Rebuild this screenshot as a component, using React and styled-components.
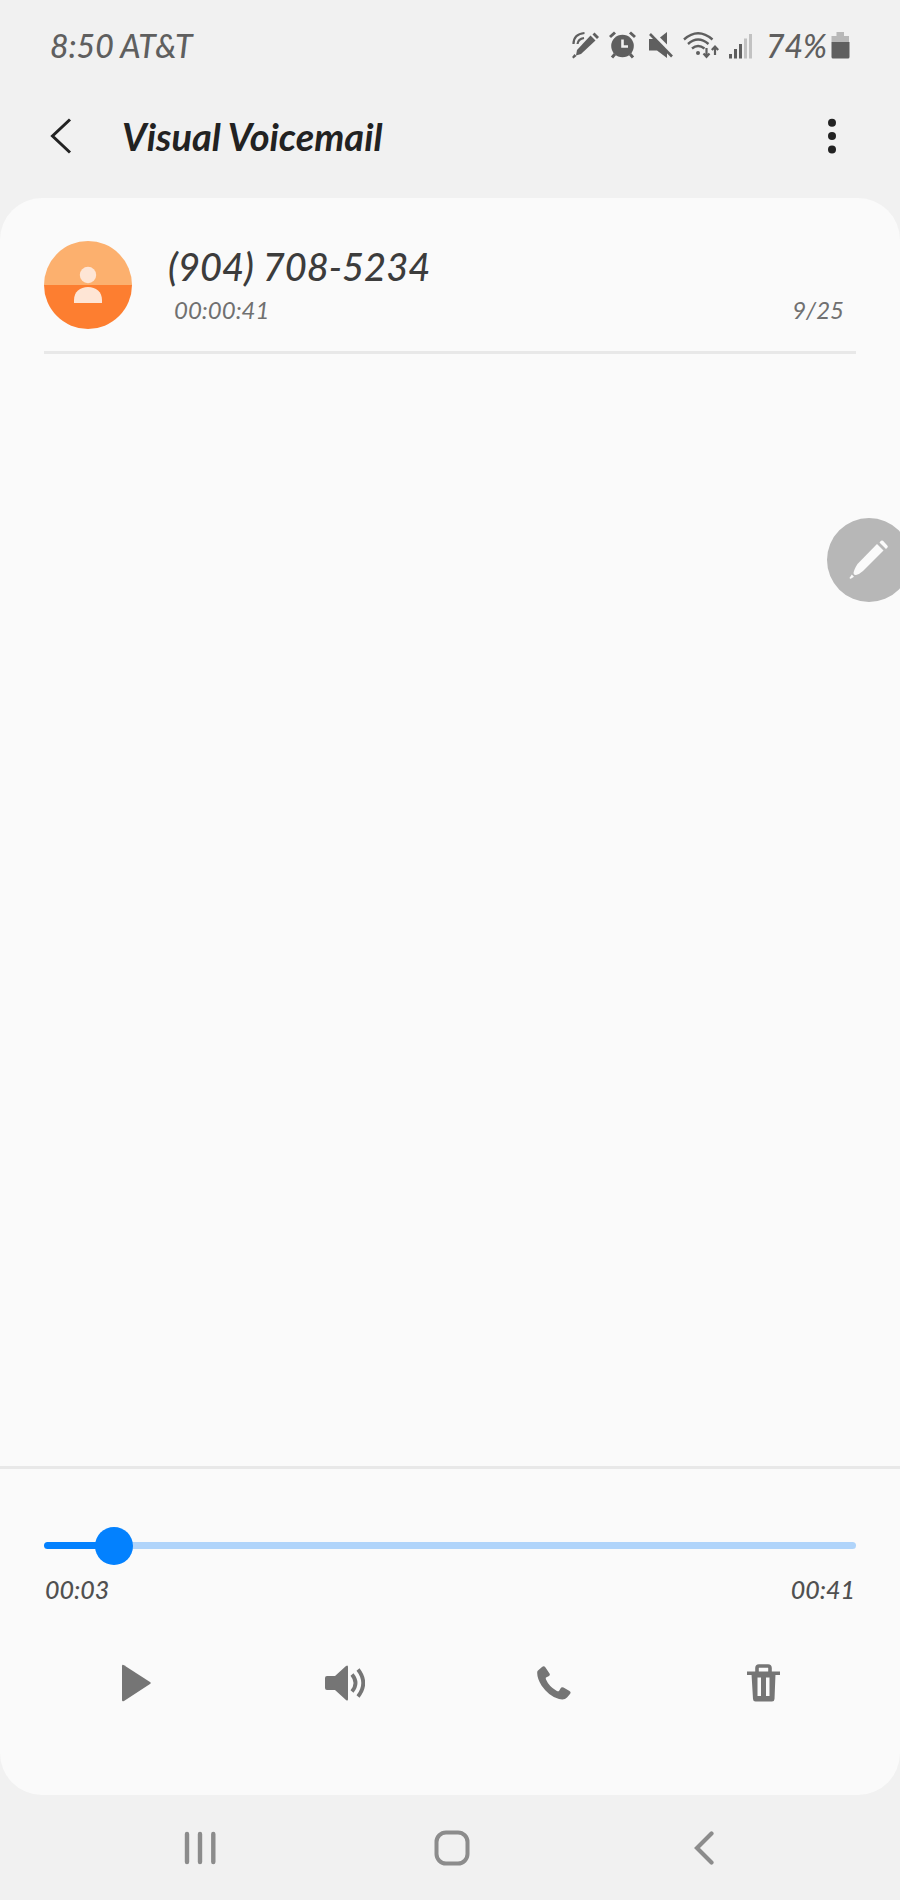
import React, { useState } from 'react';
import styled, { createGlobalStyle } from 'styled-components';

const DURATION = 41;

const App = () => {
  const [position, setPosition] = useState(2.7);

  return (
    <Screen>
      <GlobalStyle />
      <StatusBar>
        <StatusText>8:50 AT&amp;T</StatusText>
        <StatusIcons>
          <PenStatusIcon />
          <AlarmIcon />
          <MuteIcon />
          <WifiIcon />
          <SignalIcon />
          <BatteryGroup>
            <StatusText>74%</StatusText>
            <BatteryIcon />
          </BatteryGroup>
        </StatusIcons>
      </StatusBar>

      <Header>
        <IconButton aria-label="Back">
          <svg width="24" height="36" viewBox="0 0 24 36" fill="none" stroke="#222" strokeWidth="3">
            <path d="M22 1.5 4.5 18 22 34.5" />
          </svg>
        </IconButton>
        <Title>Visual Voicemail</Title>
        <IconButton aria-label="More options">
          <svg width="8" height="36" viewBox="0 0 8 36" fill="#222">
            <circle cx="4" cy="4.8" r="4" />
            <circle cx="4" cy="18" r="4" />
            <circle cx="4" cy="31.4" r="4" />
          </svg>
        </IconButton>
      </Header>

      <Panel>
        <MessageList>
          <Message>
            <Avatar>
              <svg width="28" height="38" viewBox="0 0 28 38" fill="#fee5d5">
                <circle cx="14" cy="9" r="8.2" />
                <path d="M0 37V34C0 26 6 21 14 21S28 26 28 34V37Z" />
              </svg>
            </Avatar>
            <MessageInfo>
              <Phone>(904) 708-5234</Phone>
              <MessageDetails>
                <span>00:00:41</span>
                <span>9/25</span>
              </MessageDetails>
            </MessageInfo>
          </Message>
        </MessageList>

        <Player>
          <Slider
            type="range"
            aria-label="Playback position"
            min="0"
            max={DURATION}
            step="0.1"
            value={position}
            onChange={(e) => setPosition(Number(e.target.value))}
            style={{ '--played': `${(position / DURATION) * 100}%` }}
          />
          <Times>
            <span>00:03</span>
            <span>00:41</span>
          </Times>
          <Controls>
            <ControlButton aria-label="Play">
              <svg width="30" height="38" viewBox="0 0 30 38" fill="#757575">
                <path d="M1 2.2Q1 0 3 1.2L29 18Q30.5 19 29 20L3 37Q1 38 1 36Z" />
              </svg>
            </ControlButton>
            <ControlButton aria-label="Speaker">
              <svg width="40" height="36" viewBox="0 0 40 36" fill="#757575">
                <path d="M2 11H10L21 1Q23 -.5 23 2V34Q23 36.5 21 35L10 25H2Q0 25 0 23V13Q0 11 2 11Z" />
                <path d="M27 9.5Q34 18 27 26.5M33 4.500Q43.500 18 33 31.500" fill="none" stroke="#757575" strokeWidth="3.8" />
              </svg>
            </ControlButton>
            <ControlButton aria-label="Call">
              <svg width="34" height="34" viewBox="0 0 34 34" fill="#757575">
                <path d="M1 4.5 5 1Q7 -.5 8.3 1.3L12.5 7.5Q13.4 9 12 10L9 11.5Q8.5 12 9 13.5 12 20.5 19.5 24.8 21.3 25.8 22 25L23.5 22.5Q24.5 20.5 26.5 21.5L32.5 25Q34.4 26.2 33 28L30 31.5Q27.5 34.4 22 33 12 30.5 4.5 19.5 0 12 .2 6.5Q.2 5.2 1 4.5Z" />
              </svg>
            </ControlButton>
            <ControlButton aria-label="Delete">
              <svg width="33" height="38" viewBox="0 0 33 38" fill="none" stroke="#757575">
                <path d="M10 8V4Q10 2 12 2H21Q23 2 23 4V8" strokeWidth="3.6" />
                <path d="M0 9.2H33" strokeWidth="3.4" />
                <path d="M4.500 10H28.500L27.500 35Q27.300 37.500 25 37.500H8.500Q6.200 37.500 6 35ZM10.500 13.500V32H14V13.500ZM19 13.500V32H22.500V13.500Z" fill="#757575" fillRule="evenodd" stroke="none" />
              </svg>
            </ControlButton>
          </Controls>
        </Player>
      </Panel>

      <NavBar>
        <NavButton aria-label="Recent apps">
          <svg width="32" height="34" viewBox="0 0 32 34" stroke="#8c8c8c" strokeWidth="4.4" strokeLinecap="round">
            <path d="M3 3V31M16 3V31M29.3 3V31" />
          </svg>
        </NavButton>
        <NavButton aria-label="Home">
          <svg width="36" height="36" viewBox="0 0 36 36" fill="none" stroke="#8c8c8c" strokeWidth="4">
            <rect x="2.5" y="2.5" width="31" height="31" rx="9.5" />
          </svg>
        </NavButton>
        <NavButton aria-label="Back">
          <svg width="20" height="34" viewBox="0 0 20 34" fill="none" stroke="#8c8c8c" strokeWidth="4.2" strokeLinecap="round">
            <path d="M17.5 2.5 3 17 17.5 31.5" />
          </svg>
        </NavButton>
      </NavBar>

      <FloatingPen aria-label="Air command">
        <svg width="40" height="40" viewBox="0 0 40 40" fill="#fafafa">
          <path d="M28 4 34.500 10.500 14 31Q10 34.500 7 35 4.500 35.300 4.500 33 5 29.500 8.500 24Z" />
          <path d="M30.500 2.500 32 .8Q33 0 34 .8L38.300 5.500Q39.300 6.500 38.500 7.500L37 9Z" />
          <path d="M2.800 34.500 5 36.800 1.800 38.800Q.3 39 .8 37.500Z" />
        </svg>
      </FloatingPen>
    </Screen>
  );
};

const PenStatusIcon = () => (
  <svg width="27" height="28" viewBox="0 0 27 28" fill="#5f5f5f">
    <path d="M18.5 4.500 23.500 9.500 9 23 4 24.500 5 19Z" />
    <path d="M20.5 3.5 22.5 1.5 27 6 25 8Z" />
    <path d="M2.500 23 4.500 25 1.500 27.500Q0 27 .5 25.500Z" />
    <path d="M1.500 13Q1.500 3 12.500 2M5.500 13Q6 8 12 7" fill="none" stroke="#5f5f5f" strokeWidth="2.2" />
  </svg>
);

const AlarmIcon = () => (
  <svg width="27" height="28" viewBox="0 0 27 28" fill="none" stroke="#5f5f5f">
    <circle cx="13.5" cy="15" r="11.3" fill="#5f5f5f" stroke="none" />
    <path d="M1 6 6 1.500M26 6 21 1.500M6 23 3 26.500M21 23 24 26.500" strokeWidth="3" />
    <path d="M13.5 8.5V15.5H19" stroke="#f1f1f1" strokeWidth="2.6" />
  </svg>
);

const MuteIcon = () => (
  <svg width="27" height="28" viewBox="0 0 27 28" fill="#5f5f5f">
    <path d="M3 8H9L21 20V27L11 19.500H3Z" />
    <path d="M14 6.500 21 1V13.500Z" />
    <path d="M4 3 26 25.500" stroke="#5f5f5f" strokeWidth="2.6" />
  </svg>
);

const WifiIcon = () => (
  <svg width="36" height="28" viewBox="0 0 36 28" fill="none" stroke="#5f5f5f" strokeWidth="2.4">
    <path d="M1 8.500Q15 -4 29.500 8.500M5 13Q15 4 25.500 13M9 17.500Q15 12.500 21.500 17.500" />
    <circle cx="15" cy="22" r="2" fill="#5f5f5f" stroke="none" />
    <path d="M23.500 17V25M20.500 22.500 23.500 25.800 26.500 22.500M32 24V16M28.800 19 32 15.700 35.200 19" strokeWidth="2.2" />
  </svg>
);

const SignalIcon = () => (
  <svg width="23" height="28" viewBox="0 0 23 28" stroke="#5f5f5f" strokeWidth="3">
    <path d="M1.500 23V27.500M6.500 18V27.500M11.500 13V27.500" />
    <path d="M16.500 7.500V27.500M21.500 3V27.500" stroke="#c2c2c2" />
  </svg>
);

const BatteryIcon = () => (
  <svg width="19" height="28" viewBox="0 0 19 28">
    <path d="M5.500 1H13V5H18V11H.5V5H5.500Z" fill="#b8b8b8" />
    <path d="M.5 11H18.500V26Q18.500 27.500 17 27.500H2Q.5 27.500 .5 26Z" fill="#5f5f5f" />
  </svg>
);

export default App;

const GlobalStyle = createGlobalStyle`
  * {
    box-sizing: border-box;
  }

  body {
    margin: 0;
    background-color: #f1f1f1;
    font-family: Lato, "Liberation Sans", sans-serif;
    font-style: italic;
  }

  button {
    padding: 0;
    border: none;
    background: none;
    cursor: pointer;
  }

  svg {
    display: block;
    flex-shrink: 0;
  }
`;

const Screen = styled.div`
  position: relative;
  display: flex;
  flex-direction: column;
  min-height: 100vh;
  overflow: hidden;
  background-color: #f1f1f1;
`;

const StatusBar = styled.div`
  display: flex;
  align-items: center;
  justify-content: space-between;
  height: 90px;
  padding: 0 50px;
`;

const StatusText = styled.span`
  font-size: 32px;
  font-weight: 500;
  color: #5f5f5f;
`;

const StatusIcons = styled.div`
  display: flex;
  align-items: center;
  gap: 10px;
`;

const BatteryGroup = styled.div`
  display: flex;
  align-items: center;
  gap: 4px;
  margin-left: 4px;
`;

const Header = styled.header`
  display: flex;
  align-items: center;
  height: 108px;
  padding: 0 52px 16px 44px;
`;

const IconButton = styled.button`
  display: flex;
  align-items: center;
  justify-content: center;
  min-width: 32px;
  height: 64px;
`;

const Title = styled.h1`
  flex: 1;
  margin: 0;
  padding-left: 46px;
  font-size: 38px;
  font-weight: bold;
  color: #222;
`;

const Panel = styled.main`
  flex: 1;
  display: flex;
  flex-direction: column;
  background-color: #fafafa;
  border-radius: 42px;
`;

const MessageList = styled.ul`
  flex: 1;
  margin: 0;
  padding: 43px 44px 0;
  list-style: none;
`;

const Message = styled.li`
  display: flex;
  gap: 36px;
  padding-bottom: 22px;
  border-bottom: 3px solid #e8e8e8;
`;

const Avatar = styled.div`
  display: flex;
  align-items: center;
  justify-content: center;
  width: 88px;
  height: 88px;
  border-radius: 50%;
  background: linear-gradient(#fcb06e 50%, #fd7e30 50%);
`;

const MessageInfo = styled.div`
  flex: 1;
`;

const Phone = styled.div`
  font-size: 38px;
  font-weight: 500;
  line-height: 50px;
  color: #3c3c3c;
`;

const MessageDetails = styled.div`
  display: flex;
  justify-content: space-between;
  padding: 0 12px 0 6px;
  font-size: 24px;
  line-height: 38px;
  color: #707070;
`;

const Player = styled.section`
  padding-bottom: 76px;
  border-top: 3px solid #e8e8e8;
`;

const Slider = styled.input`
  display: block;
  appearance: none;
  width: calc(100% - 88px);
  height: 38px;
  margin: 57px 44px 6px;
  background: none;
  cursor: pointer;

  &::-webkit-slider-runnable-track {
    height: 7px;
    border-radius: 4px;
    background: linear-gradient(to right, #0381fe var(--played), #b0d4fa var(--played));
  }

  &::-webkit-slider-thumb {
    appearance: none;
    width: 38px;
    height: 38px;
    margin-top: -15px;
    border-radius: 50%;
    background-color: #0381fe;
  }
`;

const Times = styled.div`
  display: flex;
  justify-content: space-between;
  padding: 0 45px;
  font-size: 25px;
  font-weight: 500;
  line-height: 38px;
  color: #505050;
`;

const Controls = styled.div`
  display: grid;
  grid-template-columns: repeat(4, 1fr);
  margin-top: 39px;
  padding: 0 32px 0 31px;
`;

const ControlButton = styled.button`
  display: flex;
  align-items: center;
  justify-content: center;
  height: 72px;
`;

const NavBar = styled.nav`
  display: grid;
  grid-template-columns: repeat(3, 1fr);
  height: 105px;
  padding: 0 70px 0 74px;
`;

const NavButton = styled.button`
  display: flex;
  align-items: center;
  justify-content: center;
`;

const FloatingPen = styled.button`
  position: absolute;
  top: 518px;
  right: -11px;
  display: flex;
  align-items: center;
  justify-content: center;
  width: 84px;
  height: 84px;
  border-radius: 50%;
  && {
    background-color: #b7b7b7;
  }
`;
